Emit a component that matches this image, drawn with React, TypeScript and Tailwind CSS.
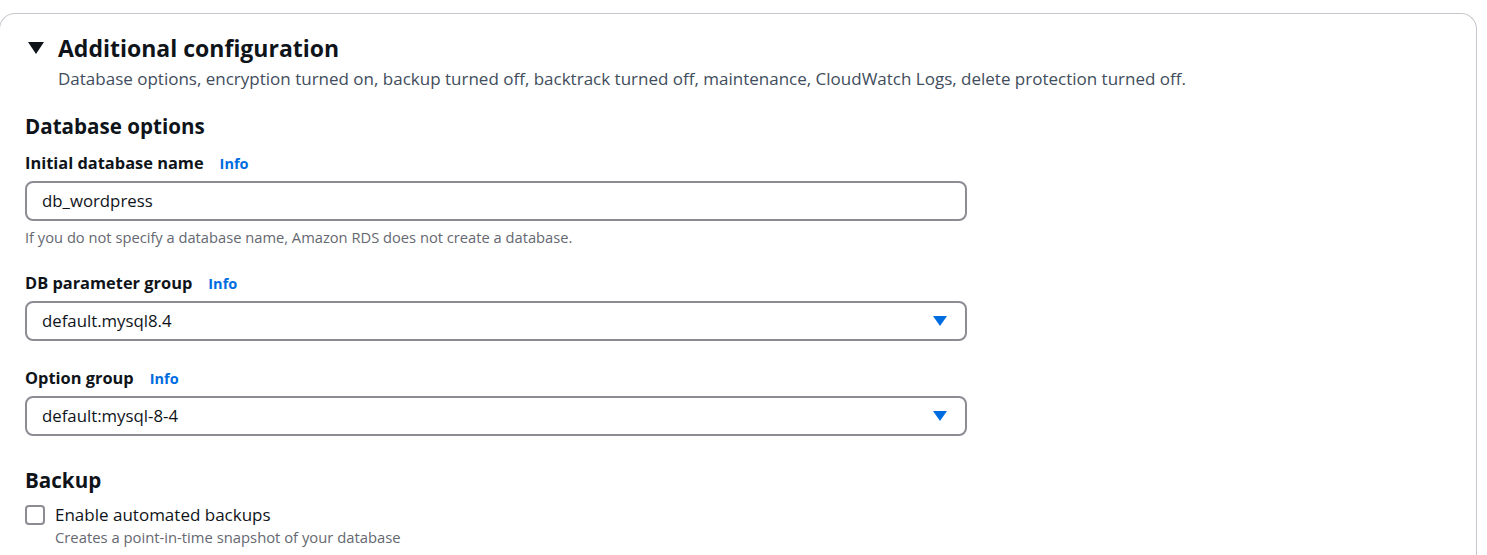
// App.tsx
// * RDS "Additional configuration" panel (database options + backup)

const font = { fontFamily: '"Open Sans", "Noto Sans", sans-serif' };

function InfoLink() {
  return <span className="ml-[16px] text-[14.5px] font-bold text-[#006ce0]">Info</span>;
}

function Label({ text }: { text: string }) {
  return (
    <div className="flex items-baseline text-[16.4px] font-bold leading-[22px] text-[#0f141a]">
      {text}
      <InfoLink />
    </div>
  );
}

function SelectBox({ value }: { value: string }) {
  return (
    <div className="mt-[6px] flex h-[40px] w-[942px] items-center justify-between rounded-[8px] border-2 border-[#8c8c94] pl-[15px] pr-[18px] text-[16.8px] text-[#0f141a]">
      <span>{value}</span>
      <svg width="14" height="10" viewBox="0 0 14 10">
        <path d="M0 0 H14 L7 10 Z" fill="#006ce0" />
      </svg>
    </div>
  );
}

export default function App() {
  return (
    <div className="min-h-screen bg-white pt-[13px]" style={font}>
      <section className="ml-[-1px] w-[1478px] rounded-t-[16px] border border-b-0 border-[#c6c6cd] pb-[20px]">
        {/* header */}
        <div className="pl-[28px] pt-[19px]">
          <div className="flex items-center gap-[14px]">
            <svg width="16" height="12" viewBox="0 0 16 12">
              <path d="M0 0 H16 L8 12 Z" fill="#0f141a" />
            </svg>
            <h2 className="text-[23px] font-bold leading-[30px] text-[#0f141a]">Additional configuration</h2>
          </div>
          <p className="ml-[30px] mt-[3px] text-[17px] leading-[26px] text-[#414d5c]">
            Database options, encryption turned on, backup turned off, backtrack turned off, maintenance, CloudWatch Logs, delete protection turned off.
          </p>
        </div>

        <div className="pl-[25px] pt-[20px]">
          {/* database options */}
          <h3 className="text-[20.6px] font-bold leading-[28px] text-[#0f141a]">Database options</h3>

          <div className="mt-[12px]">
            <Label text="Initial database name" />
            <div className="mt-[6px] flex h-[40px] w-[942px] items-center rounded-[8px] border-2 border-[#8c8c94] pl-[15px] text-[16.8px] text-[#0f141a]">
              db_wordpress
            </div>
            <p className="mt-[6px] text-[14.7px] leading-[20px] text-[#656871]">
              If you do not specify a database name, Amazon RDS does not create a database.
            </p>
          </div>

          <div className="mt-[25px]">
            <Label text="DB parameter group" />
            <SelectBox value="default.mysql8.4" />
          </div>

          <div className="mt-[26px]">
            <Label text="Option group" />
            <SelectBox value="default:mysql-8-4" />
          </div>

          {/* backup */}
          <h3 className="mt-[30px] text-[20.6px] font-bold leading-[28px] text-[#0f141a]">Backup</h3>
          <div className="mt-[8px] flex items-start gap-[10px]">
            <div className="mt-[3px] h-[20px] w-[20px] rounded-[4px] border-2 border-[#8c8c94]" />
            <div>
              <div className="text-[17px] leading-[25px] text-[#0f141a]">Enable automated backups</div>
              <div className="text-[14.8px] leading-[20px] text-[#656871]">Creates a point-in-time snapshot of your database</div>
            </div>
          </div>
        </div>
      </section>
    </div>
  );
}
